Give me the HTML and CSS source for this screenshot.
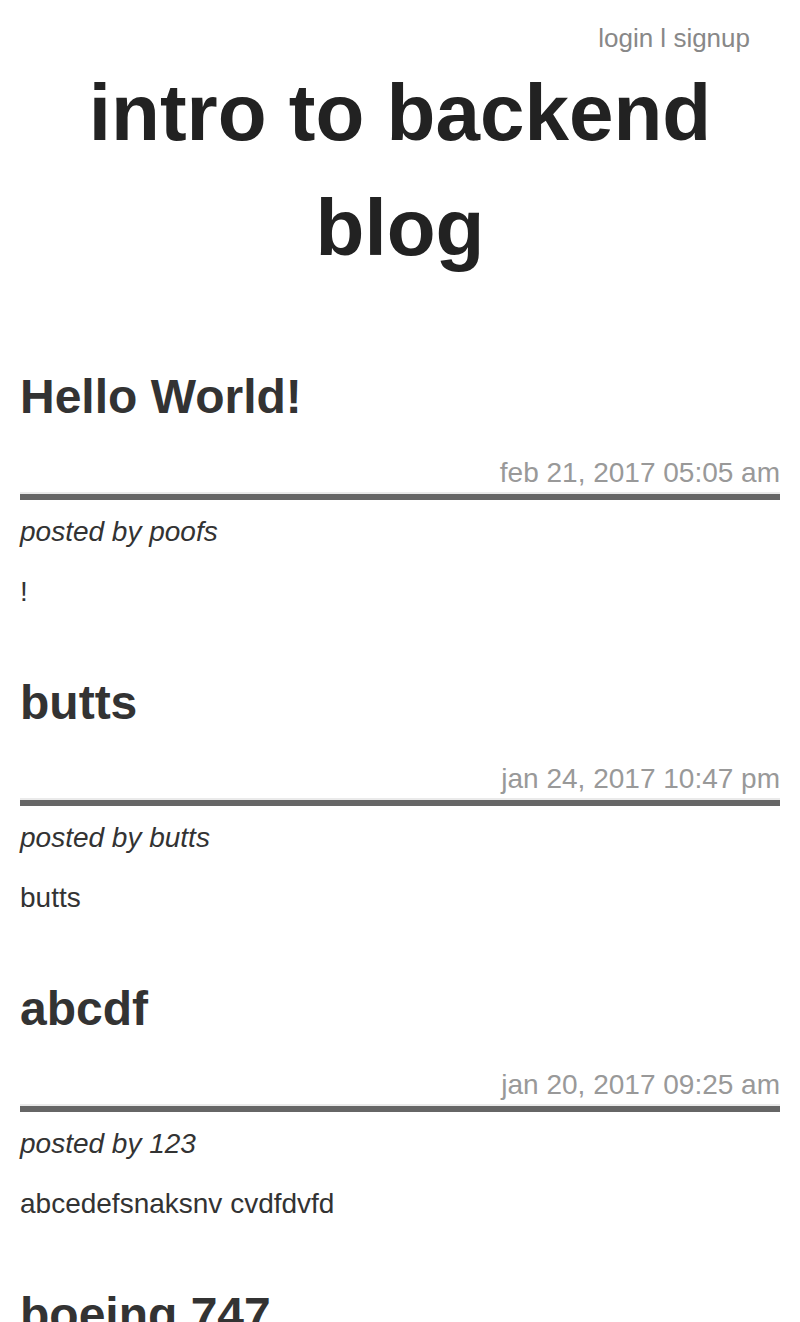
FILE: index.html
```html
<!DOCTYPE html>
<html>
<head>
<meta charset="utf-8">
<title>intro to backend blog</title>
<link rel="stylesheet" href="styles.css">
</head>
<body>
<header class="site-header">
  <nav class="topnav"><a href="#">login</a> l <a href="#">signup</a></nav>
  <h1 class="site-title">intro to backend blog</h1>
</header>
<main class="posts">
  <article class="post">
    <h2 class="post-title">Hello World!</h2>
    <div class="post-date">feb 21, 2017 05:05 am</div>
    <hr class="post-rule">
    <div class="post-author">posted by poofs</div>
    <p class="post-body">!</p>
  </article>
  <article class="post">
    <h2 class="post-title">butts</h2>
    <div class="post-date">jan 24, 2017 10:47 pm</div>
    <hr class="post-rule">
    <div class="post-author">posted by butts</div>
    <p class="post-body">butts</p>
  </article>
  <article class="post">
    <h2 class="post-title">abcdf</h2>
    <div class="post-date">jan 20, 2017 09:25 am</div>
    <hr class="post-rule">
    <div class="post-author">posted by 123</div>
    <p class="post-body">abcedefsnaksnv cvdfdvfd</p>
  </article>
  <article class="post">
    <h2 class="post-title">boeing 747</h2>
    <div class="post-date">jan 19, 2017 08:12 pm</div>
    <hr class="post-rule">
    <div class="post-author">posted by pilot</div>
    <p class="post-body">big plane</p>
  </article>
</main>
</body>
</html>
```

FILE: styles.css
```css
html, body {
  margin: 0;
  padding: 0;
  background: #fff;
}

body {
  font-family: "Liberation Sans", Arial, Helvetica, sans-serif;
  color: #333;
}

.topnav {
  padding: 23px 50px 0 0;
  text-align: right;
  font-size: 26px;
  line-height: 30px;
  color: #888;
}

.topnav a {
  color: #888;
  text-decoration: none;
}

.site-title {
  margin: 2px 0 0;
  font-size: 80px;
  line-height: 115px;
  font-weight: bold;
  text-align: center;
  color: #222;
}

.posts {
  padding: 0 20px;
}

.post-title {
  margin: 84px 0 0;
  font-size: 48px;
  line-height: 56px;
  font-weight: bold;
  color: #333;
}

.post + .post .post-title {
  margin-top: 67px;
}

.post-date {
  margin-top: 32px;
  text-align: right;
  font-size: 28px;
  line-height: 32px;
  color: #999;
}

.post-rule {
  margin: 3px 0 0;
  border: 0;
  border-top: 2px solid #eaeaea;
  height: 6px;
  background: #666;
}

.post-author {
  margin-top: 16px;
  font-size: 28px;
  line-height: 32px;
  font-style: italic;
  color: #333;
}

.post-body {
  margin: 28px 0 0;
  font-size: 28px;
  line-height: 32px;
  color: #333;
}
```
